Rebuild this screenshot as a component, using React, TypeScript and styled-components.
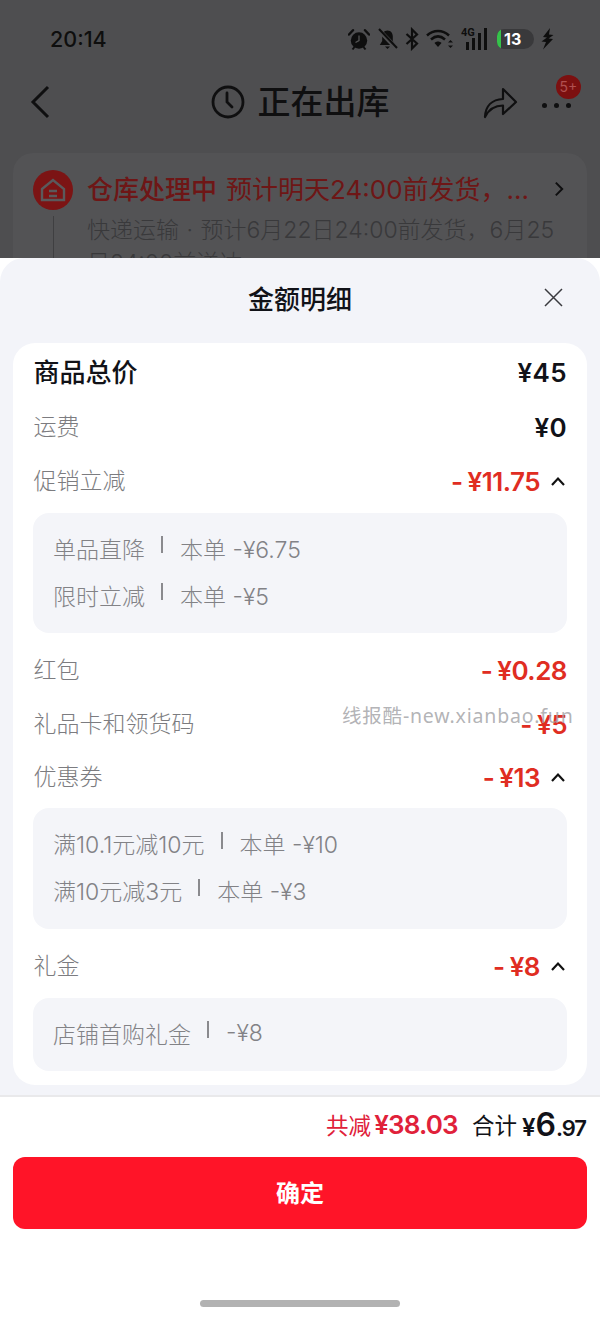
import React from "react";
import styled, { createGlobalStyle } from "styled-components";

const Global = createGlobalStyle`
  html, body { margin: 0; padding: 0; background: #fff; }
  body { font-family: Inter, "Noto Sans CJK SC", sans-serif; }
`;

const Page = styled.div`
  position: relative;
  width: 600px;
  height: 1318px;
  overflow: hidden;
  display: flex;
  flex-direction: column;
  background: #fff;
`;

const Backdrop = styled.div`
  height: 258px;
  flex: none;
  overflow: hidden;
  background: #4e4e50;
`;

const StatusBar = styled.div`
  height: 76px;
  box-sizing: border-box;
  padding: 24px 46px 0 50px;
  display: flex;
  align-items: flex-start;
  justify-content: space-between;
  color: #0e0e0e;
`;

const Time = styled.div`
  font-size: 21.5px;
  line-height: 30px;
  font-weight: 500;
`;

const StatusIcons = styled.div`
  display: flex;
  align-items: center;
  height: 30px;
  gap: 7px;
`;

const Battery = styled.div`
  position: relative;
  width: 37px;
  height: 20px;
  margin-left: 2px;
  box-sizing: border-box;
  border-radius: 7px 10px 10px 7px;
  background: #39393b;
  overflow: hidden;
  color: #fff;
  font-size: 16px;
  font-weight: 700;
  line-height: 20px;
  padding-left: 7px;
  &::before {
    content: "";
    position: absolute;
    left: 0;
    top: 0;
    bottom: 0;
    width: 4px;
    background: #35c24a;
  }
`;

const Nav = styled.div`
  height: 52px;
  box-sizing: border-box;
  padding: 0 29px;
  display: grid;
  grid-template-columns: 1fr auto 1fr;
  align-items: center;
`;

const NavTitle = styled.div`
  display: flex;
  align-items: center;
  gap: 13px;
  font-family: "Noto Sans CJK SC", sans-serif;
  font-size: 33px;
  line-height: 44px;
  font-weight: 500;
  color: #0f0f10;
`;

const TitleText = styled.span`
  padding-bottom: 5px;
`;

const NavRight = styled.div`
  display: flex;
  align-items: center;
  justify-content: flex-end;
  gap: 24px;
`;

const More = styled.div`
  position: relative;
  display: flex;
  gap: 7px;
  margin-top: 6px;
`;

const Dot = styled.span`
  width: 5px;
  height: 5px;
  border-radius: 50%;
  background: #0f0f10;
`;

const NavBadge = styled.span`
  position: absolute;
  left: 14px;
  top: -28px;
  width: 25px;
  height: 24px;
  border-radius: 50%;
  background: #7c1010;
  color: #b05050;
  font-size: 14px;
  line-height: 24px;
  text-align: center;
`;

const OrderCard = styled.div`
  margin: 25px 13px 0;
  height: 200px;
  box-sizing: border-box;
  padding: 17px 23px 0 20px;
  border-radius: 20px;
  background: #535355;
  display: grid;
  grid-template-columns: 40px 1fr 10px;
  grid-auto-rows: min-content;
  align-content: start;
  column-gap: 14px;
`;

const OrderIcon = styled.div`
  width: 40px;
  height: 40px;
  border-radius: 50%;
  background: #7c1414;
  display: flex;
  align-items: center;
  justify-content: center;
`;

const OrderTitle = styled.div`
  white-space: nowrap;
  color: #6e1616;
  font-size: 26px;
  line-height: 40px;
  height: 40px;
  overflow: hidden;
`;

const OrderStrong = styled.span`
  font-size: 26px;
  font-weight: 500;
  margin-right: 9px;
`;

const OrderChevron = styled.div`
  display: flex;
  align-items: center;
  height: 38px;
`;

const TimelineCell = styled.div`
  display: flex;
  justify-content: center;
  padding-top: 6px;
  &::after {
    content: "";
    width: 1px;
    height: 60px;
    background: #3f3f41;
  }
`;

const OrderSub = styled.div`
  grid-column: 2 / 4;
  color: #39393b;
  font-size: 23px;
  font-weight: 300;
  line-height: 33px;
  word-spacing: 1px;
  margin-top: 4px;
  margin-right: -8px;
`;

const Sheet = styled.div`
  flex: 1;
  background: #f3f4f9;
  border-radius: 24px 24px 0 0;
  display: flex;
  flex-direction: column;
`;

const SheetHead = styled.div`
  position: relative;
  height: 85px;
  flex: none;
  display: flex;
  justify-content: center;
  padding-top: 18px;
  box-sizing: border-box;
  font-family: "Noto Sans CJK SC", sans-serif;
  font-size: 26px;
  line-height: 44px;
  font-weight: 500;
  color: #111218;
`;

const Close = styled.div`
  position: absolute;
  left: 544px;
  top: 30px;
  width: 19px;
  height: 19px;
  display: flex;
`;

const Card = styled.div`
  margin: 0 13px;
  padding: 2px 20px 14px;
  background: #fff;
  border-radius: 22px;
  display: flex;
  flex-direction: column;
`;

const Row = styled.div<{ $mt?: number }>`
  height: 54px;
  flex: none;
  display: flex;
  align-items: center;
  justify-content: space-between;
  margin-top: ${(p) => p.$mt ?? 0}px;
`;

const Label = styled.div<{ $strong?: boolean }>`
  font-family: "Noto Sans CJK SC", sans-serif;
  font-size: ${(p) => (p.$strong ? 26 : 23)}px;
  font-weight: ${(p) => (p.$strong ? 500 : 300)};
  color: ${(p) => (p.$strong ? "#111218" : "#7c7c80")};
  padding: 0 0 4px 0.5px;
`;

const Amount = styled.div<{ $red?: boolean }>`
  display: flex;
  align-items: center;
  gap: 9px;
  font-size: 26px;
  font-weight: 600;
  letter-spacing: ${(p) => (p.$red ? -0.5 : 0.4)}px;
  word-spacing: -1px;
  color: ${(p) => (p.$red ? "#e02d22" : "#111218")};
`;

const Panel = styled.div<{ $mt?: number; $mb?: number; $h: number }>`
  height: ${(p) => p.$h}px;
  box-sizing: border-box;
  flex: none;
  margin-top: ${(p) => p.$mt ?? 5}px;
  margin-bottom: ${(p) => p.$mb ?? 10}px;
  padding: 0 20px 4px;
  background: #f4f5f9;
  border-radius: 16px;
  display: flex;
  flex-direction: column;
  justify-content: center;
`;

const Detail = styled.div`
  height: 47px;
  display: flex;
  align-items: center;
  font-size: 23px;
  font-weight: 300;
  color: #828286;
  white-space: nowrap;
`;

const Sep = styled.span`
  width: 2px;
  height: 17px;
  background: #8a8a8e;
  margin: -6px 17px 0 16px;
`;

const Footer = styled.div`
  margin-top: 10px;
  flex: 1;
  background: #fff;
  border-top: 2px solid #e9e9eb;
  box-sizing: border-box;
  padding: 0 13px;
  display: flex;
  flex-direction: column;
`;

const Totals = styled.div`
  height: 60px;
  box-sizing: border-box;
  padding: 0 1px 6px 0;
  display: flex;
  align-items: center;
  justify-content: flex-end;
  gap: 14px;
`;

const TotalPart = styled.div<{ $red?: boolean }>`
  white-space: nowrap;
  color: ${(p) => (p.$red ? "#e0213a" : "#111218")};
`;

const TotalLabel = styled.span<{ $lift?: number; $gap?: number }>`
  font-family: "Noto Sans CJK SC", sans-serif;
  font-size: 22.5px;
  font-weight: 400;
  margin-right: ${(p) => p.$gap ?? 3}px;
  vertical-align: ${(p) => p.$lift ?? 0}px;
`;

const TotalValue = styled.span<{ $size: number; $tight?: number }>`
  font-size: ${(p) => p.$size}px;
  font-weight: 600;
  letter-spacing: ${(p) => p.$tight ?? 0}px;
`;

const Confirm = styled.button`
  height: 72px;
  flex: none;
  border: 0;
  padding: 0 0 4px;
  border-radius: 12px;
  background: #ff1428;
  color: #fff;
  font-family: "Noto Sans CJK SC", sans-serif;
  font-size: 24px;
  font-weight: 700;
`;

const HomeBar = styled.div`
  width: 200px;
  height: 7px;
  flex: none;
  border-radius: 4px;
  background: #b2b2b2;
  margin: 71px auto 0;
`;

const Watermark = styled.div`
  position: absolute;
  z-index: 2;
  left: 342px;
  top: 702px;
  font-family: "Noto Sans", "Noto Sans CJK SC", sans-serif;
  font-size: 19.5px;
  line-height: 28px;
  letter-spacing: 0.8px;
  color: rgba(160, 160, 164, 0.8);
  white-space: nowrap;
`;

const Chevron = () => (
  <svg width="18" height="12" viewBox="0 0 18 12" fill="none" stroke="#111" strokeWidth="2.2">
    <path d="M3 10L9 3.5L15 10" />
  </svg>
);

const Alarm = () => (
  <svg width="22" height="23" viewBox="0 0 22 23">
    <circle cx="11" cy="12.5" r="8.2" fill="#0e0e0e" />
    <path d="M11 7.5V12.5L7.5 14.5" stroke="#555" strokeWidth="1.3" fill="none" />
    <path d="M1 6.5L5 2.2M21 6.5L17 2.2" stroke="#0e0e0e" strokeWidth="2.4" strokeLinecap="round" />
    <path d="M4.5 21.5L6.5 19M17.5 21.5L15.5 19" stroke="#0e0e0e" strokeWidth="2" />
  </svg>
);

const BellOff = () => (
  <svg width="21" height="22" viewBox="0 0 21 22">
    <path d="M10.5 2.5C7 2.5 5.2 5.3 5.2 8.5V13L2.8 17H18.2L15.8 13V8.5C15.8 5.3 14 2.5 10.5 2.5Z" fill="#0e0e0e" />
    <path d="M8 18.5H13L10.5 21Z" fill="#0e0e0e" />
    <path d="M1.5 1.5L19.5 20.5" stroke="#4e4e50" strokeWidth="4.5" />
    <path d="M2 1L20 20" stroke="#0e0e0e" strokeWidth="2" />
  </svg>
);

const Bt = () => (
  <svg width="14" height="24" viewBox="0 0 14 24" fill="none" stroke="#0e0e0e" strokeWidth="2.2">
    <path d="M1.5 7L12 16.5L7 21.5V2.5L12 7.5L1.5 17" />
  </svg>
);

const Wifi = () => (
  <svg width="28" height="22" viewBox="0 0 28 22" fill="none">
    <path d="M1 7.5C7.5 1.5 16.5 1.5 23 7.5" stroke="#0e0e0e" strokeWidth="2.5" />
    <path d="M5 11.5C9.5 7.5 14.5 7.5 19 11.5" stroke="#0e0e0e" strokeWidth="2.5" />
    <path d="M8.5 15C10.5 13 13.5 13 15.5 15L12 19Z" fill="#0e0e0e" />
    <path d="M22 14.5L24.5 12L27 14.5ZM22 17.5L24.5 20L27 17.5Z" fill="#0e0e0e" />
  </svg>
);

const Signal = () => (
  <svg width="27" height="24" viewBox="0 0 27 24">
    <text x="0" y="9" fontSize="11" fontWeight="700" fontFamily="Roboto" fill="#0e0e0e">4G</text>
    <rect x="5" y="15" width="3" height="8" fill="#0e0e0e" />
    <rect x="11" y="11" width="3" height="12" fill="#0e0e0e" />
    <rect x="17" y="6" width="3" height="17" fill="#0e0e0e" />
    <rect x="23" y="1" width="3" height="22" fill="#0e0e0e" />
  </svg>
);

const Bolt = () => (
  <svg width="13" height="22" viewBox="0 0 13 22">
    <path d="M9 0L2 9L6 9.5L0.5 13.5L5 14L2 21.5L12 11L7.5 10.5L12.5 7L8 6.5Z" fill="#0e0e0e" />
  </svg>
);

const Back = () => (
  <svg width="22" height="36" viewBox="0 0 22 36" fill="none" stroke="#0f0f10" strokeWidth="3">
    <path d="M19 3L4 18L19 33" />
  </svg>
);

const ClockIcon = () => (
  <svg width="34" height="34" viewBox="0 0 34 34" fill="none" stroke="#0f0f10" strokeWidth="2.8" strokeLinecap="round">
    <circle cx="17" cy="17" r="15" />
    <path d="M16 8V17L21 22" />
  </svg>
);

const Share = () => (
  <svg width="35" height="33" viewBox="0 0 35 33" fill="none" stroke="#0f0f10" strokeWidth="2.2" strokeLinejoin="round">
    <path d="M2 31C2.5 20 9 13.5 20 13V3L33 16L20 28V19.5C12 19.5 6 23 2 31Z" />
  </svg>
);

const HouseIcon = () => (
  <svg width="28" height="26" viewBox="0 0 28 26" fill="none" stroke="#5a5a5c" strokeWidth="2.4">
    <path d="M3 12L14 3L25 12V23H3Z" />
    <path d="M10 14H18M10 19H18" />
  </svg>
);

const OrderArrow = () => (
  <svg width="11" height="18" viewBox="0 0 11 18" fill="none" stroke="#0f0f10" strokeWidth="2.2">
    <path d="M2 2L9 9L2 16" />
  </svg>
);

const CloseIcon = () => (
  <svg width="19" height="19" viewBox="0 0 19 19" fill="none" stroke="#3a3a3f" strokeWidth="1.5">
    <path d="M1 1L18 18M18 1L1 18" />
  </svg>
);

const rows = [
  { label: "单品直降", value: "本单 -¥6.75" },
  { label: "限时立减", value: "本单 -¥5" },
];
const coupons = [
  { label: "满10.1元减10元", value: "本单 -¥10" },
  { label: "满10元减3元", value: "本单 -¥3" },
];

export default function App() {
  return (
    <Page>
      <Global />
      <Backdrop>
        <StatusBar>
          <Time>20:14</Time>
          <StatusIcons>
            <Alarm />
            <BellOff />
            <Bt />
            <Wifi />
            <Signal />
            <Battery>13</Battery>
            <Bolt />
          </StatusIcons>
        </StatusBar>
        <Nav>
          <Back />
          <NavTitle>
            <ClockIcon />
            <TitleText>正在出库</TitleText>
          </NavTitle>
          <NavRight>
            <Share />
            <More>
              <Dot />
              <Dot />
              <Dot />
              <NavBadge>5+</NavBadge>
            </More>
          </NavRight>
        </Nav>
        <OrderCard>
          <OrderIcon>
            <HouseIcon />
          </OrderIcon>
          <OrderTitle>
            <OrderStrong>仓库处理中</OrderStrong>预计明天24:00前发货，...
          </OrderTitle>
          <OrderChevron>
            <OrderArrow />
          </OrderChevron>
          <TimelineCell />
          <OrderSub>快递运输 · 预计6月22日24:00前发货，6月25日24:00前送达</OrderSub>
        </OrderCard>
      </Backdrop>
      <Sheet>
        <SheetHead>
          金额明细
          <Close>
            <CloseIcon />
          </Close>
        </SheetHead>
        <Card>
          <Row>
            <Label $strong>商品总价</Label>
            <Amount>¥45</Amount>
          </Row>
          <Row $mt={1}>
            <Label>运费</Label>
            <Amount>¥0</Amount>
          </Row>
          <Row>
            <Label>促销立减</Label>
            <Amount $red>
              - ¥11.75
              <Chevron />
            </Amount>
          </Row>
          <Panel $h={120}>
            {rows.map((r) => (
              <Detail key={r.label}>
                {r.label}
                <Sep />
                {r.value}
              </Detail>
            ))}
          </Panel>
          <Row>
            <Label>红包</Label>
            <Amount $red>- ¥0.28</Amount>
          </Row>
          <Row>
            <Label>礼品卡和领货码</Label>
            <Amount $red>- ¥5</Amount>
          </Row>
          <Row $mt={-1}>
            <Label>优惠券</Label>
            <Amount $red>
              - ¥13
              <Chevron />
            </Amount>
          </Row>
          <Panel $h={121} $mt={4}>
            {coupons.map((r) => (
              <Detail key={r.label}>
                {r.label}
                <Sep />
                {r.value}
              </Detail>
            ))}
          </Panel>
          <Row>
            <Label>礼金</Label>
            <Amount $red>
              - ¥8
              <Chevron />
            </Amount>
          </Row>
          <Panel $h={73} $mb={0}>
            <Detail>
              店铺首购礼金
              <Sep />
              -¥8
            </Detail>
          </Panel>
        </Card>
        <Footer>
          <Totals>
            <TotalPart $red>
              <TotalLabel>共减</TotalLabel>
              <TotalValue $size={26} $tight={-0.8}>¥38.03</TotalValue>
            </TotalPart>
            <TotalPart>
              <TotalLabel $lift={2} $gap={5}>合计</TotalLabel>
              <TotalValue $size={24}>¥</TotalValue>
              <TotalValue $size={32}>6</TotalValue>
              <TotalValue $size={22} $tight={-1}>.97</TotalValue>
            </TotalPart>
          </Totals>
          <Confirm>确定</Confirm>
          <HomeBar />
        </Footer>
      </Sheet>
      <Watermark>线报酷-new.xianbao.fun</Watermark>
    </Page>
  );
}
